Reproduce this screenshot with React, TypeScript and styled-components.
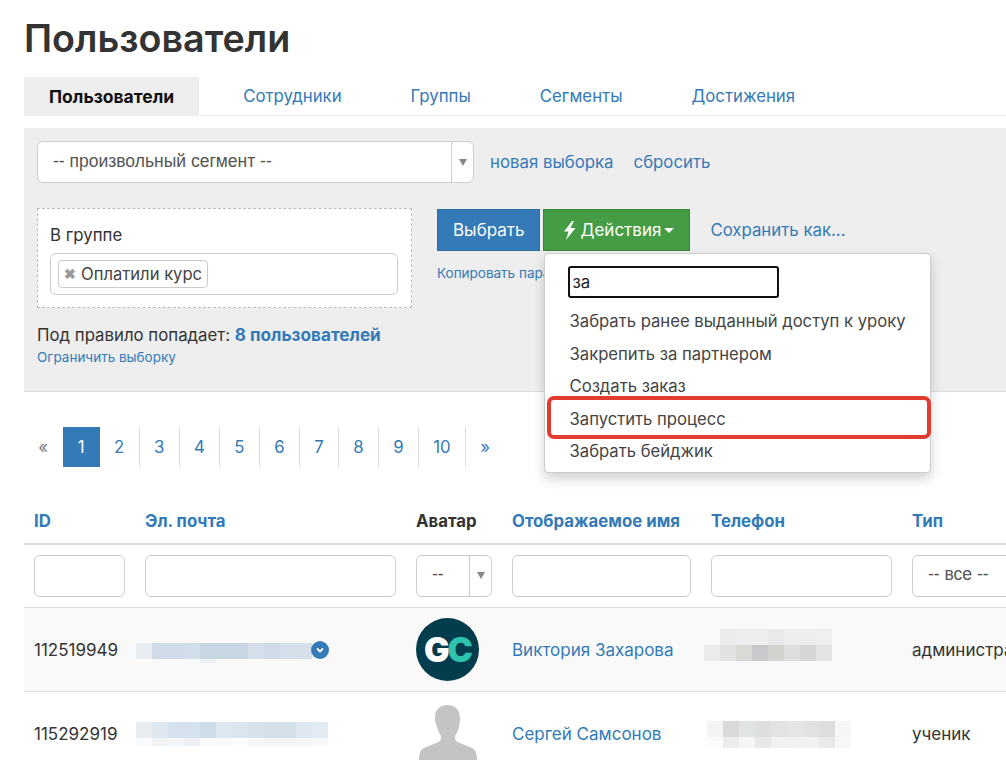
import styled, { createGlobalStyle } from "styled-components";

const GlobalStyle = createGlobalStyle`
  html, body {
    margin: 0;
    height: 767px;
    overflow: hidden;
    background: #fff;
  }
  body {
    font-family: Inter, "Noto Sans", sans-serif;
    font-size: 16.8px;
    color: #333;
  }
  * { box-sizing: border-box; }
`;

const Page = styled.div`
  width: 1006px;
  height: 767px;
  padding-left: 24px;
  overflow: hidden;
`;

const Title = styled.h1`
  margin: 0;
  padding-top: 15px;
  height: 77px;
  font-size: 37.7px;
  line-height: 46px;
  font-weight: 600;
  color: #333;
`;

const Tabs = styled.div`
  display: flex;
  gap: 19px;
  height: 39px;
  border-bottom: 1px solid #eee;
`;

const Tab = styled.a<{ $active?: boolean }>`
  height: 38px;
  padding: 0 25px;
  display: flex;
  align-items: center;
  font-size: ${(p) => (p.$active ? "17.5px" : "16.8px")};
  font-weight: ${(p) => (p.$active ? 700 : 400)};
  color: ${(p) => (p.$active ? "#111" : "#337ab7")};
  background: ${(p) => (p.$active ? "#eee" : "transparent")};
`;

const Panel = styled.div`
  margin-top: 12px;
  height: 264px;
  padding: 13px;
  background: #eee;
  border-bottom: 1px solid #ddd;
`;

const SegmentRow = styled.div`
  display: flex;
  align-items: center;
  gap: 20px;
`;

const SegmentSelect = styled.div`
  margin-right: -4px;
`;

const SelectBox = styled.div<{ $width: number }>`
  width: ${(p) => p.$width}px;
  height: 42px;
  flex: none;
  display: flex;
  background: #fff;
  border: 1px solid #ccc;
  border-radius: 6px;
`;

const SelectValue = styled.span`
  flex: 1;
  padding: 0 0 2px 15px;
  display: flex;
  align-items: center;
  font-family: "Liberation Sans", Arial, sans-serif;
  color: #555;
  font-size: 17.5px;
  white-space: nowrap;
`;

const SelectArrow = styled.span`
  width: 22px;
  flex: none;
  border-left: 1px solid #ccc;
  display: flex;
  align-items: center;
  justify-content: center;
  &::after {
    content: "";
    border-left: 4px solid transparent;
    border-right: 4px solid transparent;
    border-top: 7px solid #888;
  }
`;

const PanelLink = styled.a`
  color: #337ab7;
  white-space: nowrap;
`;

const RuleRow = styled.div`
  margin-top: 25px;
  display: flex;
  align-items: flex-start;
  gap: 25px;
`;

const RuleBox = styled.div`
  width: 375px;
  height: 100px;
  flex: none;
  padding: 14px 13px 0 12px;
  background: #fff;
  border: 1px dashed #bbb;
`;

const RuleLabel = styled.div`
  line-height: 24px;
  margin-bottom: 6px;
`;

const TagInput = styled.div`
  height: 42px;
  padding: 6px 7px;
  background: #fff;
  border: 1px solid #ccc;
  border-radius: 6px;
`;

const Tag = styled.span`
  height: 28px;
  display: inline-flex;
  align-items: center;
  gap: 5px;
  padding: 0 5px;
  font-size: 16.6px;
  border: 1px solid #ccc;
  border-radius: 4px;
  color: #444;
`;

const TagRemove = styled.span`
  color: #999;
  font-size: 14px;
  font-weight: 700;
  line-height: 1;
`;

const ActionsColumn = styled.div`
  margin-top: 1px;
  display: flex;
  flex-direction: column;
`;

const ButtonRow = styled.div`
  display: flex;
  align-items: center;
  gap: 3px;
`;

const Button = styled.button<{ $color: string; $border: string }>`
  height: 42px;
  padding: 0 14px 0 15px;
  display: flex;
  align-items: center;
  gap: 5px;
  font: inherit;
  font-size: 17px;
  color: #fff;
  background: ${(p) => p.$color};
  border: 1px solid ${(p) => p.$border};
`;

const ActionsButton = styled(Button)`
  padding: 0 15px 0 19px;
`;

const Caret = styled.span`
  margin-left: -2px;
  border-left: 5px solid transparent;
  border-right: 5px solid transparent;
  border-top: 5px solid #fff;
`;

const ActionsGroup = styled.div`
  position: relative;
  margin-right: 17px;
`;

const Menu = styled.div`
  position: absolute;
  left: 1px;
  top: 44px;
  z-index: 10;
  width: 387px;
  height: 220px;
  padding: 12px 23px;
  background: #fff;
  border: 1px solid #ccc;
  border-radius: 4px;
  box-shadow: 0 6px 12px rgba(0, 0, 0, 0.175);
`;

const MenuSearch = styled.input`
  display: block;
  width: 211px;
  height: 32px;
  padding: 0 3px;
  margin-bottom: 7px;
  font: inherit;
  color: #222;
  border: 2px solid #111;
  border-radius: 3px;
  outline: none;
`;

const MenuItem = styled.div`
  position: relative;
  height: 32.5px;
  padding-left: 2px;
  display: flex;
  align-items: center;
  font-size: 16.65px;
  color: #444;
  white-space: nowrap;
`;

const Highlight = styled.span`
  position: absolute;
  left: -21px;
  right: -24px;
  top: -7px;
  bottom: -4px;
  border: 4px solid #e23b30;
  border-radius: 7px;
`;

const SmallLink = styled.a`
  color: #337ab7;
  font-size: 13.5px;
  white-space: nowrap;
`;

const CopyLink = styled(SmallLink)`
  margin-top: 14px;
`;

const RuleCount = styled.div`
  margin-top: 16px;
  line-height: 21px;
`;

const RuleCountLink = styled.a`
  color: #337ab7;
  font-size: 17.2px;
  font-weight: 700;
`;

const Pagination = styled.nav`
  margin-top: 35px;
  height: 40px;
  display: flex;
`;

const PageItem = styled.a<{ $active?: boolean; $plain?: boolean; $muted?: boolean }>`
  padding: 0 14.3px;
  display: flex;
  align-items: center;
  color: ${(p) => (p.$active ? "#fff" : p.$muted ? "#777" : "#337ab7")};
  background: ${(p) => (p.$active ? "#337ab7" : "transparent")};
  border-right: 1px solid ${(p) => (p.$active || p.$plain ? "transparent" : "#ddd")};
`;

const Table = styled.table`
  margin-top: 33px;
  width: 1120px;
  table-layout: fixed;
  border-collapse: collapse;
`;

const HeadCell = styled.th<{ $width: number; $dark?: boolean }>`
  width: ${(p) => p.$width}px;
  height: 44px;
  padding: 0 10px 2px;
  text-align: left;
  font-weight: 700;
  color: ${(p) => (p.$dark ? "#333" : "#337ab7")};
  border-bottom: 2px solid #ddd;
`;

const FilterCell = styled.td`
  height: 63px;
  padding: 0 10px;
  border-bottom: 1px solid #ddd;
`;

const FilterInput = styled.input`
  display: block;
  width: 100%;
  height: 42px;
  background: #fff;
  border: 1px solid #ccc;
  border-radius: 6px;
  outline: none;
`;

const Row = styled.tr<{ $striped?: boolean }>`
  background: ${(p) => (p.$striped ? "#f9f9f9" : "#fff")};
`;

const Cell = styled.td`
  height: 84px;
  padding: 2px 10px 0;
  font-size: 17px;
  white-space: nowrap;
  overflow: hidden;
  border-bottom: 1px solid #ddd;
`;

const NameLink = styled.a`
  color: #337ab7;
`;

const EmailWrap = styled.div`
  display: flex;
  align-items: center;
  margin-left: -9px;
`;

const Mosaic = styled.div<{ $left?: number; $top?: number; $bottom?: number }>`
  display: flex;
  flex-direction: column;
  margin: ${(p) => p.$top ?? 0}px 0 ${(p) => p.$bottom ?? 0}px ${(p) => p.$left ?? 0}px;
`;

const MosaicRow = styled.div<{ $height: number }>`
  display: flex;
  height: ${(p) => p.$height}px;
`;

const MosaicCell = styled.span<{ $color: string }>`
  width: 16px;
  flex: none;
  background: ${(p) => p.$color};
`;

const VerifiedBadge = styled.span`
  width: 18px;
  height: 18px;
  flex: none;
  margin-left: -1px;
  border-radius: 50%;
  background: #337ab7;
  display: flex;
  align-items: center;
  justify-content: center;
`;

const GcAvatar = styled.div`
  width: 63px;
  height: 63px;
  margin-top: -2px;
  border-radius: 50%;
  background: #033c4d;
  display: flex;
  align-items: center;
  justify-content: center;
  font-size: 34px;
  font-weight: 900;
  letter-spacing: -2px;
  color: #fff;
`;

const GcAccent = styled.span`
  color: #2dc3ad;
`;

type MosaicData = { height: number; cells: string[] }[];

const email1: MosaicData = [
  { height: 16, cells: ["#e8edf2", "#d0dce8", "#d0dce8", "#d2deea", "#c9d7e5", "#c9d7e5", "#c9d7e5", "#d4dfea", "#cfdbe7", "#d6e0eb", "#d6e0eb"] },
  { height: 4, cells: ["#fff", "#f6f8fa", "#f6f8fa", "#f8f9fa", "#eef2f6", "#fafafa", "transparent", "transparent", "transparent", "transparent", "transparent"] },
];
const email2: MosaicData = [
  { height: 16, cells: ["#e8edf2", "#dfe7ef", "#d5e1ec", "#d5e1ec", "#cfdde9", "#dfe8f0", "#dbe5ee", "#d7e2ec", "#d3dfe9", "#d3dfe9", "#dee7ef", "#e3ebf2"] },
  { height: 8, cells: ["#fafbfc", "#f0f3f6", "#f2f5f8", "#edf1f5", "#f7f9fa", "#f7f9fa", "#fbfcfc", "#f4f6f8", "#f3f5f7", "#f3f5f7", "#f3f5f7", "#f6f8fa"] },
];
const phone1: MosaicData = [
  { height: 16, cells: ["transparent", "#ebebeb", "#eeeeee", "#eeeeee", "#e9e9e9", "#ededed", "#ededed", "#efefef"] },
  { height: 16, cells: ["#ebebeb", "#e2e2e2", "#d9d9d5", "#c8c9cc", "#d2d2ce", "#dedede", "#d5d5d7", "#e4e4e4"] },
];
const phone2: MosaicData = [
  { height: 16, cells: ["#f4f4f4", "#d9d9d9", "#e0e4e5", "#dedede", "#e3e3e3", "#e6e6e6", "#e1e1e1", "#dddddd", "#f6f6f6"] },
  { height: 11, cells: ["#fbfbfb", "#ececec", "#f5f5f5", "#e8e8e8", "#f1f2f3", "#f1f1f1", "#f1f1f1", "#e9e9e9", "#f7f7f7"] },
];

type BlurProps = { data: MosaicData; left?: number; top?: number; bottom?: number };

const Blur = ({ data, left, top, bottom }: BlurProps): JSX.Element => (
  <Mosaic $left={left} $top={top} $bottom={bottom}>
    {data.map((row, i) => (
      <MosaicRow key={i} $height={row.height}>
        {row.cells.map((color, j) => (
          <MosaicCell key={j} $color={color} />
        ))}
      </MosaicRow>
    ))}
  </Mosaic>
);

const menuItems = [
  "Забрать ранее выданный доступ к уроку",
  "Закрепить за партнером",
  "Создать заказ",
  "Запустить процесс",
  "Забрать бейджик",
];

const pages = ["1", "2", "3", "4", "5", "6", "7", "8", "9", "10"];

export default function App(): JSX.Element {
  return (
    <Page>
      <GlobalStyle />
      <Title>Пользователи</Title>
      <Tabs>
        <Tab $active>Пользователи</Tab>
        <Tab>Сотрудники</Tab>
        <Tab>Группы</Tab>
        <Tab>Сегменты</Tab>
        <Tab>Достижения</Tab>
      </Tabs>

      <Panel>
        <SegmentRow>
          <SegmentSelect>
            <SelectBox $width={437}>
              <SelectValue>-- произвольный сегмент --</SelectValue>
              <SelectArrow />
            </SelectBox>
          </SegmentSelect>
          <PanelLink>новая выборка</PanelLink>
          <PanelLink>сбросить</PanelLink>
        </SegmentRow>

        <RuleRow>
          <RuleBox>
            <RuleLabel>В группе</RuleLabel>
            <TagInput>
              <Tag>
                <TagRemove>✖</TagRemove>
                Оплатили курс
              </Tag>
            </TagInput>
          </RuleBox>
          <ActionsColumn>
            <ButtonRow>
              <Button $color="#337ab7" $border="#2e6da4">Выбрать</Button>
              <ActionsGroup>
                <ActionsButton $color="#449d44" $border="#398439">
                  <svg width="13" height="19" viewBox="0 0 13 19">
                    <path fill="#fff" d="M9 0 L1 10.5 L5.5 10.5 L3 19 L12.5 7 L7.5 7 L11 0 Z" />
                  </svg>
                  Действия
                  <Caret />
                </ActionsButton>
                <Menu>
                  <MenuSearch readOnly value="за" />
                  {menuItems.map((item) => (
                    <MenuItem key={item}>
                      {item}
                      {item === "Запустить процесс" && <Highlight />}
                    </MenuItem>
                  ))}
                </Menu>
              </ActionsGroup>
              <PanelLink>Сохранить как...</PanelLink>
            </ButtonRow>
            <CopyLink>Копировать параметры</CopyLink>
          </ActionsColumn>
        </RuleRow>

        <RuleCount>
          Под правило попадает: <RuleCountLink>8 пользователей</RuleCountLink>
          <br />
          <SmallLink>Ограничить выборку</SmallLink>
        </RuleCount>
      </Panel>

      <Pagination>
        <PageItem $plain $muted>«</PageItem>
        {pages.map((n) => (
          <PageItem key={n} $active={n === "1"}>{n}</PageItem>
        ))}
        <PageItem $plain>»</PageItem>
      </Pagination>

      <Table>
        <thead>
          <tr>
            <HeadCell $width={111}>ID</HeadCell>
            <HeadCell $width={271}>Эл. почта</HeadCell>
            <HeadCell $width={96} $dark>Аватар</HeadCell>
            <HeadCell $width={199}>Отображаемое имя</HeadCell>
            <HeadCell $width={201}>Телефон</HeadCell>
            <HeadCell $width={242}>Тип</HeadCell>
          </tr>
          <tr>
            <FilterCell><FilterInput /></FilterCell>
            <FilterCell><FilterInput /></FilterCell>
            <FilterCell>
              <SelectBox $width={76}>
                <SelectValue>--</SelectValue>
                <SelectArrow />
              </SelectBox>
            </FilterCell>
            <FilterCell><FilterInput /></FilterCell>
            <FilterCell><FilterInput /></FilterCell>
            <FilterCell>
              <SelectBox $width={200}>
                <SelectValue>-- все --</SelectValue>
              </SelectBox>
            </FilterCell>
          </tr>
        </thead>
        <tbody>
          <Row $striped>
            <Cell>112519949</Cell>
            <Cell>
              <EmailWrap>
                <Blur data={email1} top={5} />
                <VerifiedBadge>
                  <svg width="10" height="10" viewBox="0 0 10 10" fill="none">
                    <path d="M2 3.5 L5 6.5 L8 3.5" stroke="#fff" strokeWidth="1.8" />
                  </svg>
                </VerifiedBadge>
              </EmailWrap>
            </Cell>
            <Cell>
              <GcAvatar>G<GcAccent>C</GcAccent></GcAvatar>
            </Cell>
            <Cell><NameLink>Виктория Захарова</NameLink></Cell>
            <Cell><Blur data={phone1} left={-7} bottom={10} /></Cell>
            <Cell>администратор</Cell>
          </Row>
          <Row>
            <Cell>115292919</Cell>
            <Cell>
              <EmailWrap>
                <Blur data={email2} />
              </EmailWrap>
            </Cell>
            <Cell>
              <svg width="63" height="63" viewBox="0 2 63 63">
                <path
                  fill="#c4c4c4"
                  d="M31 6c8 0 13 5 13 13 0 4-1 9-2 12-1 3-3 5-3 7 0 3 1 5 5 6l12 5c3 1 4 4 5 9v3H3v-3c1-5 2-8 5-9l12-5c4-1 5-3 5-6 0-2-2-4-3-7-1-3-3-8-3-12 0-8 5-13 12-13z"
                />
              </svg>
            </Cell>
            <Cell><NameLink>Сергей Самсонов</NameLink></Cell>
            <Cell><Blur data={phone2} left={-4} /></Cell>
            <Cell>ученик</Cell>
          </Row>
        </tbody>
      </Table>
    </Page>
  );
}
